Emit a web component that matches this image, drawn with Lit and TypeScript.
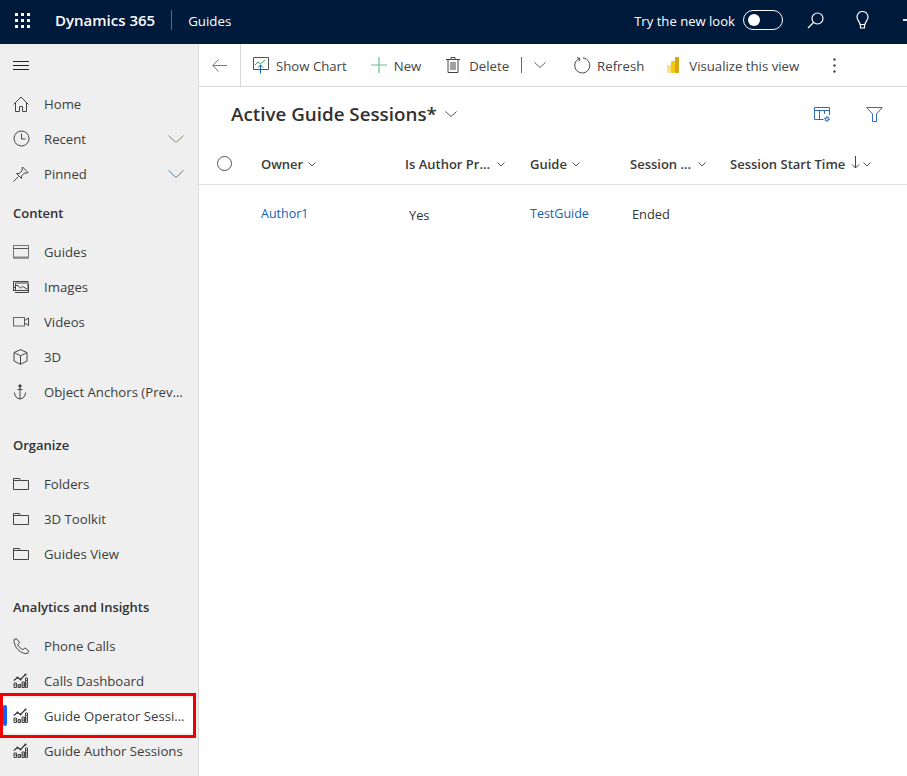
import { LitElement, html, css, svg } from 'lit';
import { customElement } from 'lit/decorators.js';

const ic = (w: number, h: number, body: unknown, cls = '') => html`<svg class=${cls} width=${w} height=${h} viewBox="0 0 ${w} ${h}" fill="none" stroke="currentColor" stroke-width="1">${body}</svg>`;

const chevron = (w = 16, h = 8) => html`<svg width=${w} height=${h} viewBox="0 0 ${w} ${h}" fill="none" stroke="currentColor" stroke-width="1"><path d="M.5.5 ${w / 2} ${h - 0.5} ${w - 0.5}.5"/></svg>`;
const smallChevron = html`<svg class="hchev" width="8" height="5" viewBox="0 0 8 5" fill="none" stroke="#555" stroke-width="1"><path d="M.5.5 4 4 7.500.5"/></svg>`;

const icons: Record<string, unknown> = {
  home: ic(16, 16, svg`<path d="M.5 8.500 8 1l7.500 7.500M2.500 6.500v9h4v-5h3v5h4v-9"/>`),
  clock: ic(17, 17, svg`<circle cx="8.500" cy="8.500" r="7.500"/><path d="M8.500 3.500v5.500h4"/>`),
  pin: ic(16, 16, svg`<path d="M.5 15.500 5.500 10.500M9.500 1l5.500 5.500-1 .5-3 .2-2.500 3v2.300L3.500 7.500H6l3-2.500.2-3z"/>`),
  guides: ic(16, 14, svg`<rect x=".5" y=".5" width="15" height="12.500" stroke="#777"/><path d="M.5 3.500h15" stroke="#555"/><path d="M0 12.500h16" stroke="#888" stroke-width="2"/>`),
  images: ic(16, 12, svg`<rect x=".5" y=".5" width="14.500" height="9"/><path d="M2.500 9.500V2h12M1 7l3-3 3.500 3 2-1.500L14 8"/><path d="M2 11.500h13.500V3"/>`),
  videos: ic(16, 10, svg`<rect x=".5" y=".5" width="11" height="8.500" stroke="#666"/><path d="M11.500 3.500 15.500 1v7.500l-4-2.500"/>`),
  cube: ic(15, 16, svg`<path d="M7.500.7 14 3.500v8.500l-6.500 3.300L1 12V3.500zM1 3.500l6.500 3.300L14 3.500M7.500 6.800v8.500"/>`),
  anchor: ic(14, 16, svg`<circle cx="7" cy="2" r="1.200" fill="currentColor"/><path d="M7 3v12M4.500 5.500h5M1.500 8.500c0 4 2.500 6 5.500 6.500 3-.5 5.500-2.500 5.500-6.500"/>`),
  folder: ic(16, 12, svg`<path d="M.5.5h6l1 2h8v9H.5zM.5 2.500h7"/>`),
  phone: ic(16, 16, svg`<path d="M1 1.500 3.500.7l3 3.800-1.800 2c.8 2 3 4.200 5.200 5.200l2-1.800 3.800 3-1 2.500c-7 1-14-6-13.700-13.900z"/>`),
  chart: ic(15, 15, svg`<path d="M1 10h2.500v4.500H1zM5 11.500h2.500v3H5zM9 9h2.500v5.500H9zM12.500 5h2v9.500h-2z" stroke="#444"/><path d="M1 12h2.500M5 13h2.500M9 11h2.500M9 12.800h2.500M12.500 7.500h2M12.500 10h2M12.500 12h2" stroke="#555"/><path d="M.8 7.500l3.700-3 3 2 4.500-4.500" stroke="#333" stroke-width="1.200"/><circle cx="4.500" cy="4.500" r="1" fill="#333" stroke="none"/><circle cx="7.500" cy="6.500" r="1" fill="#333" stroke="none"/><circle cx="12.500" cy="1.500" r="1.100" fill="#333" stroke="none"/>`),
};

const NAV_TOP = [
  { icon: 'home', label: 'Home' },
  { icon: 'clock', label: 'Recent', chev: '#8a8068' },
  { icon: 'pin', label: 'Pinned', chev: '#4f82b0' },
];

const GROUPS = [
  { title: 'Content', items: [['guides', 'Guides'], ['images', 'Images'], ['videos', 'Videos'], ['cube', '3D'], ['anchor', 'Object Anchors (Preview)']] },
  { title: 'Organize', items: [['folder', 'Folders'], ['folder', '3D Toolkit'], ['folder', 'Guides View']] },
  { title: 'Analytics and Insights', items: [['phone', 'Phone Calls'], ['chart', 'Calls Dashboard'], ['chart', 'Guide Operator Sessions'], ['chart', 'Guide Author Sessions']] },
];

@customElement('app-root')
export class AppRoot extends LitElement {
  static styles = css`
    :host {
      display: block;
      width: 907px;
      height: 776px;
      overflow: hidden;
      font-family: "Open Sans", "Noto Sans", sans-serif;
      font-size: 13px;
      color: #323130;
      background: #fff;
    }
    .top {
      height: 44px;
      box-sizing: border-box;
      padding-bottom: 4px;
      background: #001a3b;
      color: #fff;
      display: flex;
      align-items: center;
      overflow: hidden;
    }
    .waffle {
      display: grid;
      grid-template-columns: repeat(3, 3px);
      gap: 3px;
      margin-left: 15px;
      width: 15px;
    }
    .waffle i { width: 3px; height: 3px; background: #fff; }
    .brand { font-size: 15px; font-weight: 600; margin-left: 25px; }
    .sep { width: 1px; height: 20px; background: #5a6780; margin-left: 16px; }
    .app { font-size: 13.3px; margin-left: 16px; padding-top: 2px; }
    .top-right { margin-left: auto; display: flex; align-items: center; }
    .look { font-size: 13.1px; margin-right: 8px; padding-top: 2px; }
    .toggle {
      width: 40px;
      height: 20px;
      border: 1px solid #fff;
      border-radius: 10px;
      display: flex;
      align-items: center;
      padding-left: 4px;
      box-sizing: border-box;
      margin-right: 24px;
    }
    .toggle i { width: 12px; height: 12px; border-radius: 50%; background: #fff; }
    .search { margin-right: 32px; display: block; }
    .bulb { margin-right: 34px; display: block; }
    .clip { width: 4px; height: 2px; background: #dfe6f2; }

    .body { display: flex; height: 732px; }
    .side {
      width: 199px;
      flex: none;
      box-sizing: border-box;
      background: #efefef;
      border-right: 1px solid #dcdcdc;
    }
    .burger {
      height: 42px;
      box-sizing: border-box;
      padding: 2px 0 0 13px;
      display: flex;
      align-items: center;
      color: #222;
    }
    .row {
      height: 35px;
      display: flex;
      align-items: center;
      position: relative;
      color: #3d3c3b;
      font-size: 13.2px;
    }
    .row .ico {
      width: 44px;
      padding-left: 13px;
      box-sizing: border-box;
      flex: none;
      display: flex;
      color: #444;
    }
    .row .lbl {
      white-space: nowrap;
      overflow: hidden;
      text-overflow: ellipsis;
      width: 142px;
    }
    .row .chev { position: absolute; left: 168px; top: 14px; display: flex; }
    .row.sel { background: #fff; margin-right: 2px; }
    .row.sel::before {
      content: '';
      position: absolute;
      left: 3px;
      top: 7px;
      width: 4px;
      height: 21px;
      border-radius: 2px;
      background: #0f62fe;
    }
    .head {
      height: 43px;
      display: flex;
      align-items: center;
      padding-left: 13px;
      font-weight: 600;
      color: #323130;
    }
    .group + .group { margin-top: 14px; }
    .mark {
      position: absolute;
      left: 0;
      top: 693px;
      width: 196px;
      height: 45px;
      box-sizing: border-box;
      border: 3px solid #f00000;
      pointer-events: none;
    }

    .main { flex: 1; min-width: 0; }
    .cmd {
      height: 43px;
      box-sizing: border-box;
      border-bottom: 1px solid #d8d8d8;
      display: flex;
      align-items: center;
      white-space: nowrap;
    }
    .back {
      width: 42px;
      height: 42px;
      flex: none;
      box-sizing: border-box;
      border-right: 1px solid #d8d8d8;
      display: flex;
      align-items: center;
      justify-content: center;
      color: #777;
    }
    .btn { display: flex; align-items: center; color: #444; font-size: 13.2px; }
    .btn svg { display: block; }
    .btn span { padding-top: 2px; }
    .vr { width: 1px; height: 16px; background: #666; }
    .title-row {
      height: 56px;
      box-sizing: border-box;
      padding: 0 0 2px 32px;
      display: flex;
      align-items: center;
    }
    .title { font-size: 18.8px; font-weight: 600; color: #323130; margin-right: 8px; }
    .title-row .tools { margin-left: auto; display: flex; align-items: center; color: #2f6db5; }
    .grid-head, .grid-row {
      display: grid;
      grid-template-columns: 62px 144px 125px 100px 100px 1fr;
    }
    .grid-head {
      height: 41px;
      border-bottom: 1px solid #dedede;
      align-items: center;
      font-weight: 600;
      color: #3b3a39;
      white-space: nowrap;
    }
    .check {
      width: 15px;
      height: 15px;
      border: 1px solid #555;
      border-radius: 50%;
      margin-left: 18px;
      box-sizing: border-box;
    }
    .hchev { margin-left: 5px; vertical-align: 2px; }
    .far .hchev { margin-left: 7px; }
    .arrow { margin-left: 6px; margin-right: -2px; }
    .grid-row { padding-top: 20px; line-height: 18px; font-size: 12.8px; }
    .link { color: #1160b7; font-size: 12.5px; }
    .yes { padding: 1px 0 0 4px; }
    .ended { padding-left: 2px; }
  `;

  private _row(icon: string, label: string, chev?: string) {
    const sel = label === 'Guide Operator Sessions';
    return html`
      <div class="row ${sel ? 'sel' : ''}">
        <span class="ico">${icons[icon]}</span>
        <span class="lbl">${label}</span>
        ${chev ? html`<span class="chev" style="color:${chev}">${chevron()}</span>` : ''}
      </div>
    `;
  }

  private _top() {
    return html`
      <div class="top">
        <div class="waffle">${Array.from({ length: 9 }, () => html`<i></i>`)}</div>
        <span class="brand">Dynamics 365</span>
        <span class="sep"></span>
        <span class="app">Guides</span>
        <div class="top-right">
          <span class="look">Try the new look</span>
          <span class="toggle"><i></i></span>
          <svg class="search" width="17" height="17" viewBox="0 0 17 17" fill="none" stroke="#fff" stroke-width="1.200"><circle cx="10.500" cy="6.500" r="5.500"/><path d="M6.500 10.500 1 16"/></svg>
          <svg class="bulb" width="13" height="18" viewBox="0 0 13 18" fill="none" stroke="#fff" stroke-width="1.200"><path d="M4 13.500C4 10.500 1 9.500 1 6a5.500 5.500 0 0 1 11 0c0 3.500-3 4.500-3 7.500zM4.500 13.500v3.500h4v-3.500"/></svg>
          <span class="clip"></span>
        </div>
      </div>
    `;
  }

  private _side() {
    return html`
      <nav class="side">
        <div class="burger">
          <svg width="16" height="10" viewBox="0 0 16 10" stroke="currentColor"><path d="M0 .5h16M0 4.500h16M0 8.500h16"/></svg>
        </div>
        ${NAV_TOP.map((n) => this._row(n.icon, n.label, n.chev))}
        ${GROUPS.map((g) => html`
          <div class="group">
            <div class="head">${g.title}</div>
            ${g.items.map(([i, l]) => this._row(i, l))}
          </div>
        `)}
      </nav>
    `;
  }

  private _cmd() {
    return html`
      <div class="cmd">
        <div class="back">
          <svg width="15" height="13" viewBox="0 0 15 13" fill="none" stroke="currentColor"><path d="M6.500.5.800 6.500l5.700 6M1 6.500h14"/></svg>
        </div>
        <div class="btn" style="margin-left:12px">
          <svg width="16" height="17" viewBox="0 0 16 17" fill="none"><path d="M.5.500h15v12H.5z" stroke="#555"/><path d="M2 8l3-3 2.500 2L12 3" stroke="#2fa84f"/><path d="M7.500 16.500V8M5 10.500 7.500 8 10 10.500" stroke="#1160b7"/></svg>
          <span style="margin-left:7px">Show Chart</span>
        </div>
        <div class="btn" style="margin-left:24px">
          <svg width="16" height="16" viewBox="0 0 16 16" stroke="#65c08f" stroke-width="1.200"><path d="M8 0v16M0 8h16"/></svg>
          <span style="margin-left:7px">New</span>
        </div>
        <div class="btn" style="margin-left:25px">
          <svg width="14" height="16" viewBox="0 0 14 16" fill="none" stroke="#444"><path d="M0 2.500h14M5 2.500V.5h4v2M2 2.500v13h10v-13M5 5v8M7 5v8M9 5v8"/></svg>
          <span style="margin-left:9px">Delete</span>
        </div>
        <span class="vr" style="margin-left:12px"></span>
        <span style="margin-left:12px;display:flex;color:#666">${chevron(12, 6)}</span>
        <div class="btn" style="margin-left:28px">
          <svg width="17" height="17" viewBox="0 0 17 17" fill="none" stroke="#444"><path d="M5.500 1.500A7.500 7.500 0 1 0 9 1M3 .5 6 1.500 5 4.500"/></svg>
          <span style="margin-left:6px">Refresh</span>
        </div>
        <div class="btn" style="margin-left:23px">
          <svg width="12" height="16" viewBox="0 0 12 16"><rect x="0" y="8" width="4" height="8" rx="1" fill="#f9e27d"/><rect x="4" y="4" width="4" height="12" rx="1" fill="#f2c811"/><rect x="8" y="0" width="4" height="16" rx="1" fill="#d9a514"/></svg>
          <span style="margin-left:10px">Visualize this view</span>
        </div>
        <svg style="margin-left:34px" width="3" height="15" viewBox="0 0 3 15" fill="#444"><circle cx="1.500" cy="1.500" r="1.200"/><circle cx="1.500" cy="7.500" r="1.200"/><circle cx="1.500" cy="13.500" r="1.200"/></svg>
      </div>
    `;
  }

  render() {
    return html`
      ${this._top()}
      <div class="body">
        ${this._side()}
        <main class="main">
          ${this._cmd()}
          <div class="title-row">
            <span class="title">Active Guide Sessions*</span>
            <span style="display:flex;color:#555">${chevron(12, 6)}</span>
            <div class="tools">
              <svg width="16" height="15" viewBox="0 0 16 15" fill="none" stroke="currentColor"><path d="M9.500 12.500H.5V.5h15V8M.5 3.500h15M5.500 3.500v9M10.500 3.500V7"/><circle cx="13" cy="12" r="1.500"/><circle cx="13" cy="12" r="2.500" stroke-dasharray="1.500 1.100"/></svg>
              <svg style="margin:0 24px 0 36px" width="17" height="15" viewBox="0 0 17 15" fill="none" stroke="currentColor"><path d="M.8.500h15.400L10.500 7v7.500h-4V7z"/></svg>
            </div>
          </div>
          <div class="grid-head">
            <span class="check"></span>
            <span>Owner${smallChevron}</span>
            <span class="far">Is Author Pr...${smallChevron}</span>
            <span>Guide${smallChevron}</span>
            <span class="far">Session ...${smallChevron}</span>
            <span>Session Start Time<svg class="arrow" width="9" height="13" viewBox="0 0 9 13" fill="none" stroke="#444"><path d="M4.500 0v12M1 8.500 4.500 12 8 8.500"/></svg>${smallChevron}</span>
          </div>
          <div class="grid-row">
            <span></span>
            <span class="link">Author1</span>
            <span class="yes">Yes</span>
            <span class="link">TestGuide</span>
            <span class="ended">Ended</span>
          </div>
        </main>
      </div>
      <div class="mark"></div>
    `;
  }
}
